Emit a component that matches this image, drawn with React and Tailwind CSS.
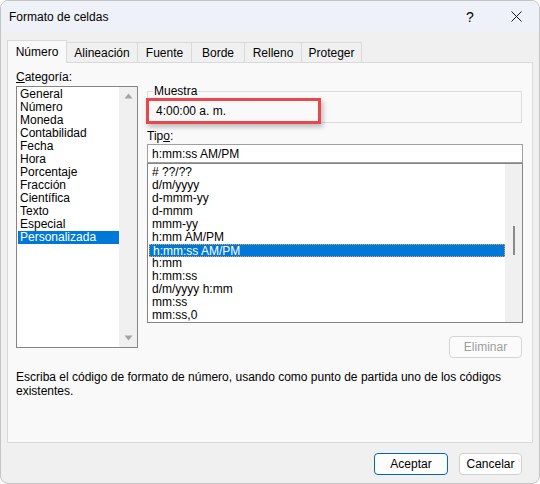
import { useState } from "react";

const categories = [
  "General",
  "Número",
  "Moneda",
  "Contabilidad",
  "Fecha",
  "Hora",
  "Porcentaje",
  "Fracción",
  "Científica",
  "Texto",
  "Especial",
  "Personalizada",
];

const formats = [
  "# ??/??",
  "d/m/yyyy",
  "d-mmm-yy",
  "d-mmm",
  "mmm-yy",
  "h:mm AM/PM",
  "h:mm:ss AM/PM",
  "h:mm",
  "h:mm:ss",
  "d/m/yyyy h:mm",
  "mm:ss",
  "mm:ss,0",
];

const tabs = [
  { label: "Número", w: "w-[60px]" },
  { label: "Alineación", w: "w-[71px]" },
  { label: "Fuente", w: "w-[54px]" },
  { label: "Borde", w: "w-[53px]" },
  { label: "Relleno", w: "w-[57px]" },
  { label: "Proteger", w: "w-[60px]" },
];

function ArrowUp() {
  return (
    <svg width="9" height="6" viewBox="0 0 9 6">
      <path d="M4.5 0.5 L8.5 5.5 L0.5 5.5 Z" fill="#a3a3a3" />
    </svg>
  );
}

function ArrowDown() {
  return (
    <svg width="9" height="6" viewBox="0 0 9 6">
      <path d="M0.5 0.5 L8.5 0.5 L4.5 5.5 Z" fill="#a3a3a3" />
    </svg>
  );
}

export default function App() {
  const [category, setCategory] = useState("Personalizada");
  const [format, setFormat] = useState("h:mm:ss AM/PM");

  return (
    <div className="w-[540px] h-[484px] flex flex-col overflow-hidden rounded-[8px] border border-[#c4c4c4] bg-[#f0f0f0] font-['Liberation_Sans',Arial,sans-serif] text-[12px] leading-[16px] text-black">
      {/* title bar */}
      <div className="flex h-[31px] shrink-0 items-center bg-[#eff1f8] pl-[8px]">
        <span className="flex-1">Formato de celdas</span>
        <div className="flex h-full w-[46px] items-center justify-center text-[14px]">?</div>
        <div className="flex h-full w-[46px] items-center justify-center">
          <svg width="11" height="11" viewBox="0 0 11 11">
            <path d="M0.5 0.5 L10.5 10.5 M10.5 0.5 L0.5 10.5" stroke="#1a1a1a" strokeWidth="1" />
          </svg>
        </div>
      </div>

      <div className="flex flex-1 flex-col px-[6px] pt-[8px]">
        {/* tabs */}
        <div className="flex h-[22px] items-end">
          {tabs.map((t, i) =>
            i === 0 ? (
              <div
                key={t.label}
                className={`${t.w} relative z-10 -mb-px flex h-[23px] items-center justify-center border border-b-0 border-[#d9d9d9] bg-[#f9f9f9]`}
              >
                {t.label}
              </div>
            ) : (
              <div
                key={t.label}
                className={`${t.w} flex h-[20px] items-center justify-center border border-l-0 border-b-0 border-[#d9d9d9] bg-[#f0f0f0]`}
              >
                {t.label}
              </div>
            )
          )}
        </div>

        {/* panel */}
        <div className="flex h-[381px] w-[526px] flex-col border border-[#d9d9d9] bg-[#f9f9f9] pl-[8px] pt-[6px]">
          <div className="flex">
            {/* left column */}
            <div className="flex w-[122px] flex-col">
              <div className="h-[17px]">
                <span className="underline">C</span>ategoría:
              </div>
              <div className="flex h-[262px] border border-[#858585] bg-white">
                <div className="flex-1 pl-[1px] pt-[1px]">
                  {categories.map((c) => (
                    <div
                      key={c}
                      onClick={() => setCategory(c)}
                      className={`h-[13px] pl-[2px] leading-[13px] ${
                        c === category ? "bg-[#0078d7] text-white" : ""
                      }`}
                    >
                      {c}
                    </div>
                  ))}
                </div>
                <div className="flex w-[18px] flex-col items-center justify-between bg-[#f0f0f0] py-[6px]">
                  <ArrowUp />
                  <ArrowDown />
                </div>
              </div>
            </div>

            {/* right column */}
            <div className="ml-[9px] flex w-[376px] flex-col pt-[22px]">
              <div className="relative h-[32px] w-[375px] border border-[#dcdcdc]">
                <span className="absolute -top-[9px] left-[5px] bg-[#f9f9f9] px-px">Muestra</span>
                <div className="absolute left-[-2px] top-[6px] flex h-[26px] w-[175px] items-center border-[3px] border-[#e8474b] pl-[7px] shadow-[2px_3px_5px_rgba(0,0,0,0.25)]">
                  4:00:00 a. m.
                </div>
              </div>

              <div className="mt-[5px] h-[16px]">
                Tip<span className="underline">o</span>:
              </div>
              <div className="flex h-[19px] items-center border border-[#a0a0a0] bg-white pl-[4px]">
                {format}
              </div>
              <div className="flex h-[160px] border border-[#858585] bg-white">
                <div className="flex-1 pl-[1px] pt-[2px]">
                  {formats.map((f) => (
                    <div
                      key={f}
                      onClick={() => setFormat(f)}
                      className={`h-[13px] pl-[3px] leading-[13px] ${
                        f === format
                          ? "border border-dotted border-[#f4a640] bg-[#0078d7] pl-[2px] leading-[11px] text-white"
                          : ""
                      }`}
                    >
                      {f}
                    </div>
                  ))}
                </div>
                <div className="flex w-[17px] flex-col items-center bg-[#f0f0f0] pt-[62px]">
                  <div className="h-[29px] w-[2px] bg-[#8a8a8a]" />
                </div>
              </div>

              <div className="mt-[13px] flex justify-end pr-px">
                <div className="flex h-[22px] w-[73px] items-center justify-center rounded-[4px] border border-[#d5d5d5] bg-[#fbfbfb] text-[#9d9d9d]">
                  Eliminar
                </div>
              </div>
            </div>
          </div>

          <p className="mt-[12px] w-[500px] leading-[14px]">
            Escriba el código de formato de número, usando como punto de partida uno de los códigos
            existentes.
          </p>
        </div>

        {/* footer buttons */}
        <div className="flex justify-end gap-[11px] pr-[11px] pt-[10px]">
          <div className="flex h-[22px] w-[74px] items-center justify-center rounded-[4px] border border-[#0067c0] bg-[#fdfdfd]">
            Aceptar
          </div>
          <div className="flex h-[22px] w-[63px] items-center justify-center rounded-[4px] border border-[#d0d0d0] bg-[#fdfdfd]">
            Cancelar
          </div>
        </div>
      </div>
    </div>
  );
}
